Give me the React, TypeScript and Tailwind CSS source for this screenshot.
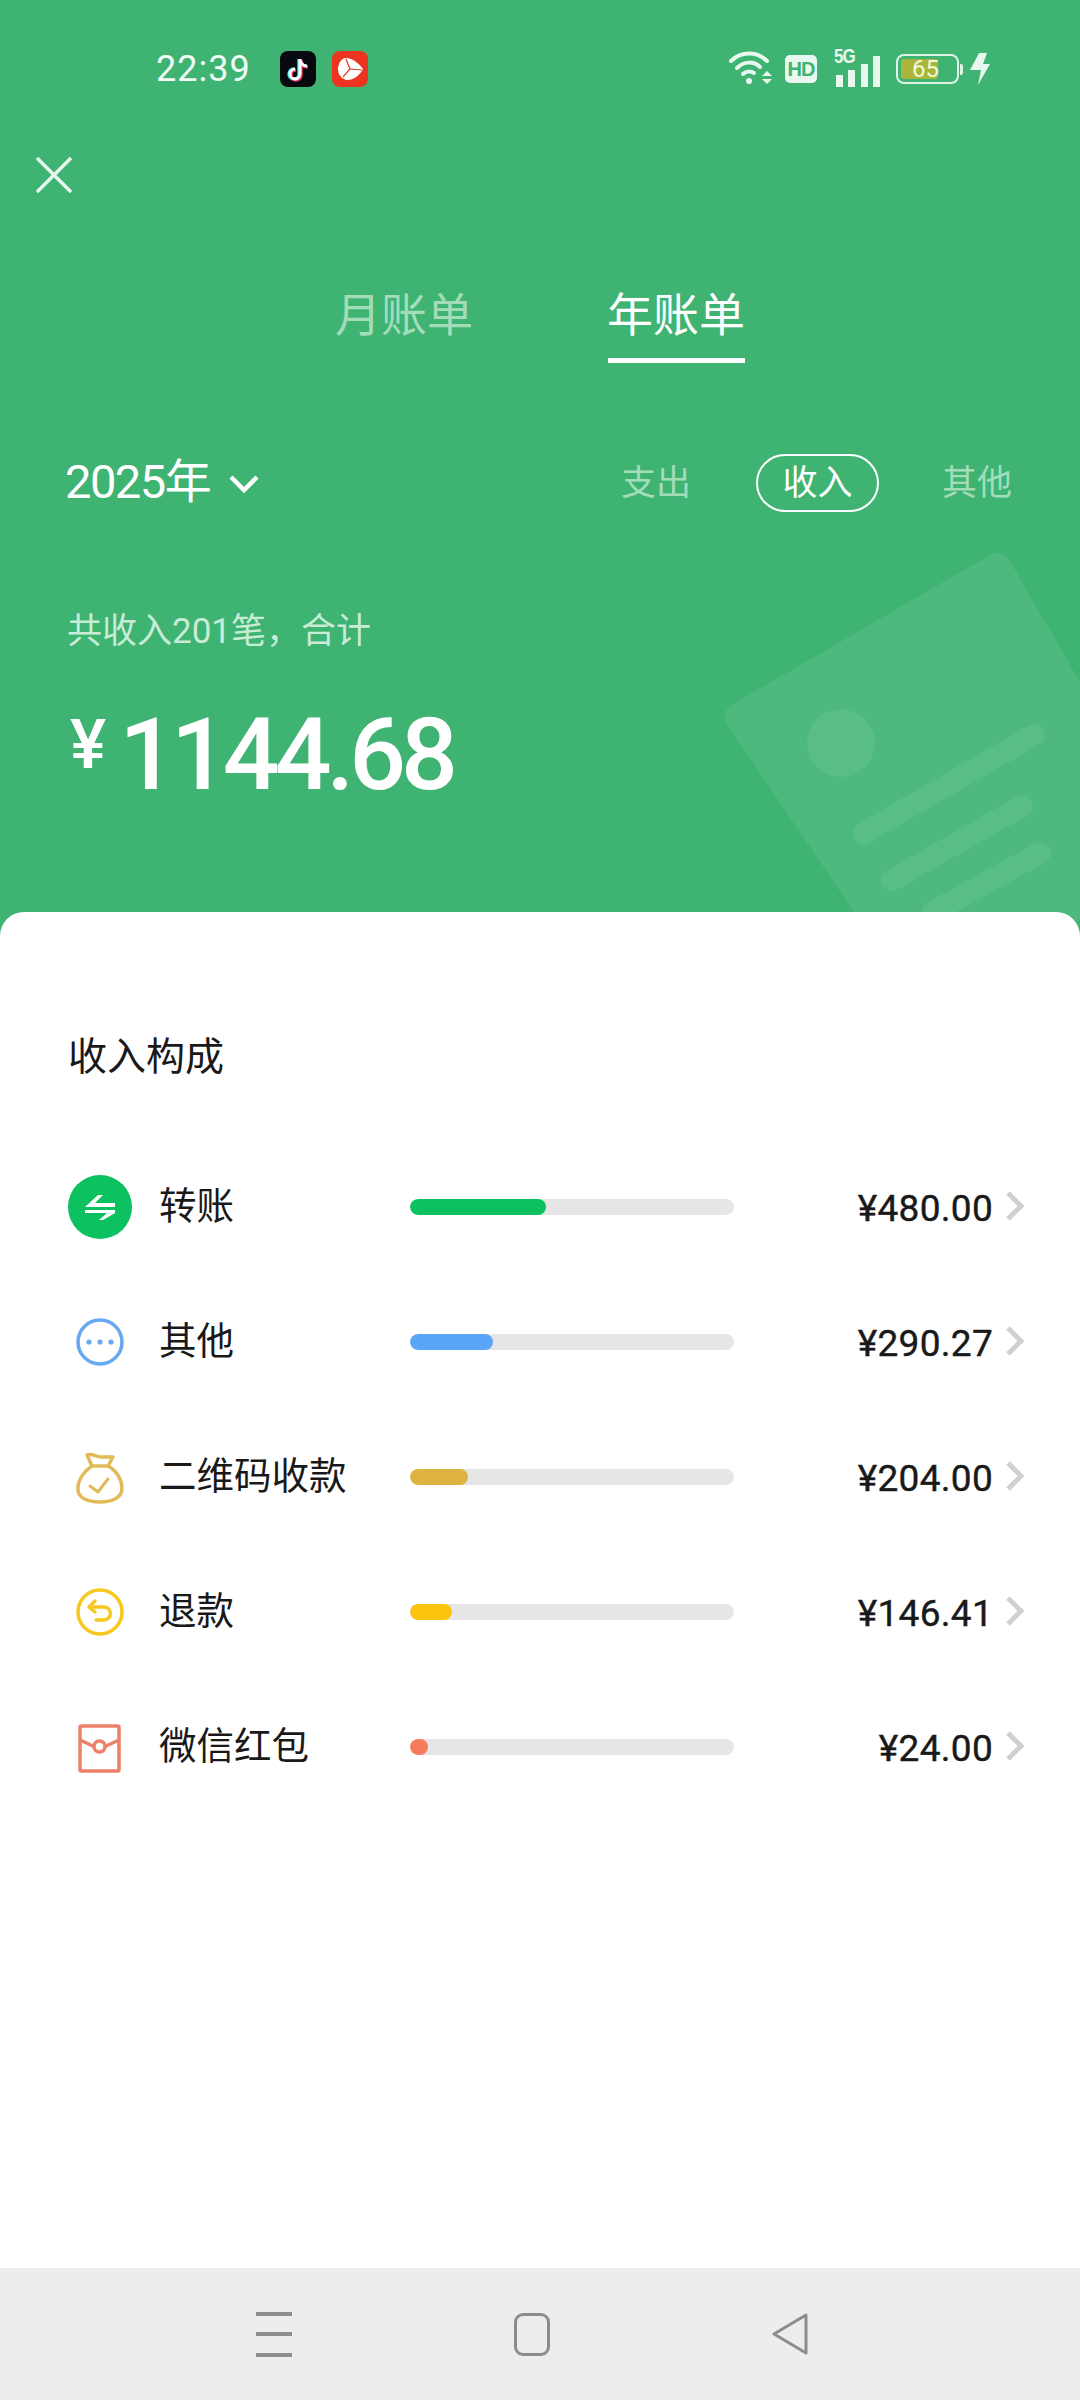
const rows = [
  { label: "转账", amount: "¥480.00", fill: "w-[136px]", color: "bg-[#0cc160]", icon: "transfer" },
  { label: "其他", amount: "¥290.27", fill: "w-[83px]", color: "bg-[#5aa5f8]", icon: "other" },
  { label: "二维码收款", amount: "¥204.00", fill: "w-[58px]", color: "bg-[#dfb341]", icon: "bag" },
  { label: "退款", amount: "¥146.41", fill: "w-[42px]", color: "bg-[#fcc40e]", icon: "refund" },
  { label: "微信红包", amount: "¥24.00", fill: "w-[18px]", color: "bg-[#f47c5c]", icon: "packet" },
];

function RowIcon({ name }: { name: string }) {
  if (name === "transfer") {
    return (
      <svg width="64" height="64" viewBox="0 0 64 64">
        <circle cx="32" cy="32" r="32" fill="#0cc160" />
        <path d="M17 32 L30 20 h5 l-8 8 h20 v4 z" fill="#fff" />
        <path d="M17 35 h30 v3 L35 45 h-4 l8-7 H17 z" fill="#fff" />
      </svg>
    );
  }
  if (name === "other") {
    return (
      <svg width="64" height="64" viewBox="0 0 64 64">
        <circle cx="32" cy="32" r="22" fill="none" stroke="#66a8f2" strokeWidth="3.5" />
        <circle cx="21" cy="32" r="2.6" fill="#66a8f2" />
        <circle cx="32" cy="32" r="2.6" fill="#66a8f2" />
        <circle cx="43" cy="32" r="2.6" fill="#66a8f2" />
      </svg>
    );
  }
  if (name === "bag") {
    return (
      <svg width="64" height="64" viewBox="0 0 64 64" fill="none" stroke="#e0bb58" strokeWidth="3.5" strokeLinejoin="round" strokeLinecap="round">
        <path d="M24 21 L19 10 C25 8 30 13 36 12 L45 12 L40 21 C49 26 54 35 54 43 C54 53 44 57 32 57 C20 57 9 53 10 43 C10 35 16 26 24 21 Z" />
        <path d="M24 21 H40" />
        <path d="M22 41 L30 47 L40 34" strokeWidth="3" />
      </svg>
    );
  }
  if (name === "refund") {
    return (
      <svg width="64" height="64" viewBox="0 0 64 64" fill="none" stroke="#f6c820" strokeWidth="3.5" strokeLinecap="round" strokeLinejoin="round">
        <circle cx="32" cy="32" r="22" />
        <path d="M27 21 l-6 6 l6 5" />
        <path d="M22 27 h14 a6.5 6.5 0 0 1 0 13 h-8" />
      </svg>
    );
  }
  return (
    <svg width="64" height="64" viewBox="0 0 64 64" fill="none" stroke="#ed8068" strokeWidth="3.5" strokeLinejoin="round">
      <rect x="12" y="11" width="39" height="45" rx="1.5" />
      <path d="M12 25 l15 7 M51 25 l-15 7" />
      <circle cx="31.5" cy="31.5" r="5.5" />
    </svg>
  );
}

export default function App() {
  return (
    <div className="relative w-[1080px] h-[2400px] flex flex-col bg-[#3eb372] overflow-hidden font-['Roboto','Noto_Sans_CJK_SC',sans-serif]">
      {/* Watermark */}
      <svg className="absolute left-[700px] top-[530px]" width="380" height="400" viewBox="700 530 380 400">
        <path d="M988 556 q14-8 22 5 l110 190 v170 h-260 l-132-195 q-8-14 5-22 z" fill="#fff" fillOpacity="0.08" />
        <circle cx="841" cy="743" r="34" fill="#fff" fillOpacity="0.07" />
        <path d="M864 833 L1034 735 M892 880 L1022 806 M933 912 L1040 853" stroke="#fff" strokeOpacity="0.07" strokeWidth="22" strokeLinecap="round" />
      </svg>

      {/* Green header */}
      <div className="relative h-[912px] shrink-0 text-white">
        {/* Status bar */}
        <div className="flex items-center h-[36px] mt-[51px] pl-[156px] pr-[90px]">
          <span className="w-[94px] text-[36px] leading-none tracking-[1px] text-[#f2fbf6]">22:39</span>
          <svg className="ml-[30px]" width="36" height="36" viewBox="0 0 36 36">
            <rect width="36" height="36" rx="8" fill="#08090f" />
            <path d="M20 8 v15 a5 5 0 1 1-5-5 M20 8 c0 4 3 7 7 7" fill="none" stroke="#2ee6ef" strokeWidth="3.4" transform="translate(-1 0)" />
            <path d="M20 8 v15 a5 5 0 1 1-5-5 M20 8 c0 4 3 7 7 7" fill="none" stroke="#f5305c" strokeWidth="3.4" transform="translate(1 1)" />
            <path d="M20 8 v15 a5 5 0 1 1-5-5 M20 8 c0 4 3 7 7 7" fill="none" stroke="#fff" strokeWidth="3" />
          </svg>
          <svg className="ml-[16px]" width="36" height="36" viewBox="0 0 36 36">
            <rect width="36" height="36" rx="8" fill="#ec3420" />
            <path d="M13 7 c6-1 14 5 18 11 c-3 6-9 11-16 11 c-6-1-9-6-9-11 c0-5 3-10 7-11z" fill="#fff" />
            <path d="M14 8 l4 10 l-7 8 M18 18 l12 1" stroke="#ec3420" strokeWidth="1.2" fill="none" />
          </svg>
          <div className="flex-1" />
          {/* Wifi */}
          <svg width="46" height="36" viewBox="0 0 46 36" fill="none" stroke="#e8f8ef" strokeWidth="4" strokeLinecap="round">
            <path d="M3 10 C13 0 29 0 39 10" />
            <path d="M9 17 C16 10 26 10 32 16" />
            <path d="M15 23 C18 20 23 20 26 22" />
            <circle cx="21" cy="30" r="3" fill="#e8f8ef" stroke="none" />
            <path d="M39 20 l5 5 h-10 z M34 28 h10 l-5 5 z" fill="#e8f8ef" stroke="none" />
          </svg>
          <div className="ml-[11px] w-[32px] h-[28px] rounded-[5px] bg-[#e8f8ef] flex items-center justify-center font-['Liberation_Sans'] font-bold text-[20px] leading-none tracking-[-1px] text-[#3eb372]">
            HD
          </div>
          {/* Signal */}
          <div className="ml-[19px] relative w-[44px] h-[36px] flex items-end justify-between">
            <span className="absolute left-[-2px] top-[-3px] font-['Liberation_Sans'] font-bold text-[17px] leading-none tracking-[-1px] text-[#e8f8ef] scale-y-[1.2]">5G</span>
            <div className="w-[7px] h-[12px] bg-[#e8f8ef]" />
            <div className="w-[7px] h-[17px] bg-[#e8f8ef]" />
            <div className="w-[7px] h-[23px] bg-[#e8f8ef]" />
            <div className="w-[7px] h-[31px] bg-[#e8f8ef]" />
          </div>
          {/* Battery */}
          <div className="ml-[16px] w-[63px] h-[30px] rounded-[8px] border-2 border-[#dcf4e6] p-[3px] relative flex">
            <div className="w-[37px] bg-[#a9b53b] rounded-[3px]" />
            <span className="absolute inset-0 flex items-center justify-center text-[24px] leading-none text-[#f2f8d8] pr-[4px]">65</span>
          </div>
          <div className="ml-[1px] w-[3px] h-[11px] bg-[#dcf4e6] rounded-r-[2px]" />
          <svg className="ml-[7px]" width="20" height="32" viewBox="0 0 20 32">
            <path d="M9 0 h8 l-4 11 h7 L8 32 l3-15 H0 z" fill="#e8f8ef" />
          </svg>
        </div>

        {/* Close */}
        <div className="mt-[70px] ml-[36px]">
          <svg width="36" height="36" viewBox="0 0 36 36" stroke="#e6f7ee" strokeWidth="3.5">
            <path d="M1 1 L35 35 M35 1 L1 35" />
          </svg>
        </div>

        {/* Tabs */}
        <div className="mt-[92px] flex justify-center gap-[134px] h-[79px]">
          <div className="text-[46px] leading-[60px] text-[#a3dcb9]">月账单</div>
          <div className="flex flex-col items-center">
            <div className="text-[46px] leading-[60px]">年账单</div>
            <div className="mt-[13px] w-[137px] h-[5px] bg-white" />
          </div>
        </div>

        {/* Year and type filter */}
        <div className="mt-[90px] flex items-center h-[58px] pl-[65px] pr-[68px]">
          <span className="text-[47px] leading-none tracking-[-1.5px] mb-[3px]">2025年</span>
          <svg className="ml-[19px] mt-[2px]" width="30" height="20" viewBox="0 0 30 20" fill="none" stroke="#fff" strokeWidth="4.5">
            <path d="M2 3 L15 16 L28 3" />
          </svg>
          <div className="flex-1" />
          <span className="text-[35px] leading-none text-[#a3dcb9]">支出</span>
          <div className="ml-[65px] w-[123px] h-[58px] rounded-full border-2 border-white flex items-center justify-center text-[35px] leading-none">
            收入
          </div>
          <span className="ml-[63px] text-[35px] leading-none text-[#a3dcb9]">其他</span>
        </div>

        {/* Total */}
        <div className="mt-[98px] ml-[67px] text-[35px] leading-[44px] text-[#c9ecd6]">共收入201笔，合计</div>
        <div className="mt-[51px] ml-[70px] flex items-start font-medium">
          <span className="text-[68px] leading-none mt-[6px]">¥</span>
          <span className="ml-[13px] text-[100px] leading-none tracking-[-5px]">1144.68</span>
        </div>
      </div>

      {/* White card */}
      <div className="relative flex-1 bg-white rounded-t-[24px] text-[#191919]">
        <div className="mt-[121px] ml-[68px] text-[39px] leading-[48px]">收入构成</div>
        <div className="mt-[58px]">
          {rows.map((row) => (
            <div key={row.label} className="flex items-center h-[135px] pl-[68px] pr-[55px]">
              <RowIcon name={row.icon} />
              <div className="ml-[27px] w-[251px] text-[37.5px] leading-none">{row.label}</div>
              <div className="w-[324px] h-[16px] rounded-full bg-[#e6e6e6] overflow-hidden">
                <div className={`h-full rounded-full ${row.fill} ${row.color}`} />
              </div>
              <div className="flex-1 text-right text-[37px] leading-none tracking-[0.3px] mt-[4px] [-webkit-text-stroke:0.4px_#191919]">{row.amount}</div>
              <svg className="ml-[13px] mb-[2px]" width="19" height="30" viewBox="0 0 19 30" fill="none" stroke="#d0d0d0" strokeWidth="5">
                <path d="M2 2 L15 15 L2 28" />
              </svg>
            </div>
          ))}
        </div>
      </div>

      {/* Navigation bar */}
      <div className="h-[132px] shrink-0 bg-[#ededed] flex items-center">
        <div className="ml-[256px] w-[36px] flex flex-col gap-[16.5px]">
          <div className="h-[4px] bg-[#8d8d8d]" />
          <div className="h-[4px] bg-[#8d8d8d]" />
          <div className="h-[4px] bg-[#8d8d8d]" />
        </div>
        <div className="ml-[222px] w-[36px] h-[43px] rounded-[9px] border-[3.5px] border-[#8d8d8d]" />
        <svg className="ml-[222px]" width="36" height="44" viewBox="0 0 36 44" fill="none" stroke="#8d8d8d" strokeWidth="3" strokeLinejoin="round">
          <path d="M2 22 L34 3 V41 Z" />
        </svg>
      </div>
    </div>
  );
}
